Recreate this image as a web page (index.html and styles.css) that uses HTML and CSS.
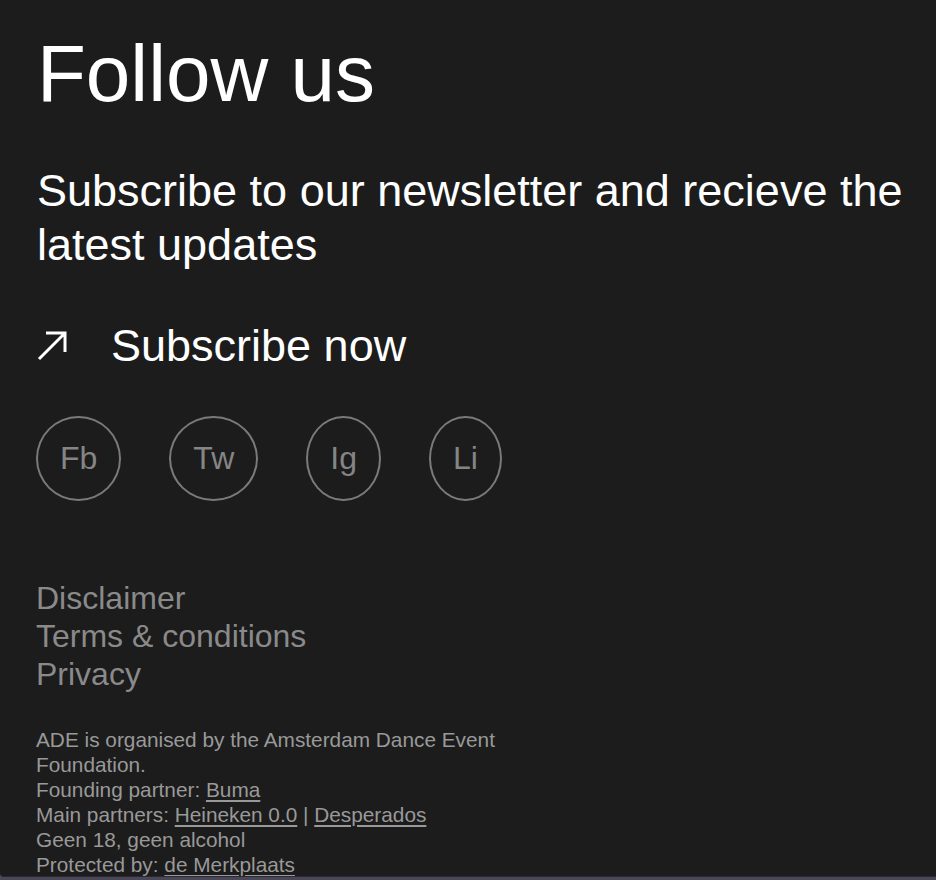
FILE: index.html
```html
<!DOCTYPE html>
<html lang="en">
<head>
<meta charset="utf-8">
<title>Follow us</title>
<link rel="stylesheet" href="styles.css">
</head>
<body>
<footer class="footer">
  <h1 class="title">Follow us</h1>
  <p class="lead">Subscribe to our newsletter and recieve the latest updates</p>
  <a class="subscribe" href="#">
    <svg class="arrow" width="30" height="30" viewBox="0 0 30 30" aria-hidden="true">
      <path d="M2 28 L28 2 M9 2 H28 V21" fill="none" stroke="#fff" stroke-width="3"/>
    </svg>
    <span>Subscribe now</span>
  </a>
  <ul class="socials">
    <li><a class="social" href="#">Fb</a></li>
    <li><a class="social" href="#">Tw</a></li>
    <li><a class="social" href="#">Ig</a></li>
    <li><a class="social" href="#">Li</a></li>
  </ul>
  <ul class="legal">
    <li><a href="#">Disclaimer</a></li>
    <li><a href="#">Terms &amp; conditions</a></li>
    <li><a href="#">Privacy</a></li>
  </ul>
  <div class="credits">
    <p>ADE is organised by the Amsterdam Dance Event Foundation.</p>
    <p>Founding partner: <a href="#">Buma</a></p>
    <p>Main partners: <a href="#">Heineken 0.0</a> | <a href="#">Desperados</a></p>
    <p>Geen 18, geen alcohol</p>
    <p>Protected by: <a href="#">de Merkplaats</a></p>
  </div>
</footer>
</body>
</html>
```

FILE: styles.css
```css
html, body {
  margin: 0;
  padding: 0;
  background: #4a4858;
}
body {
  font-family: "Liberation Sans", Arial, Helvetica, sans-serif;
  color: #fff;
  height: 880px;
  overflow: hidden;
}
.footer {
  box-sizing: border-box;
  height: 877px;
  background: #1c1c1c;
  border-bottom: 1px solid #2a2a2e;
  border-bottom-left-radius: 4px;
  padding: 28px 0 0 37px;
  display: flex;
  flex-direction: column;
  align-items: flex-start;
  overflow: hidden;
}
.title {
  margin: 0;
  font-size: 80px;
  font-weight: 400;
  line-height: 92px;
}
.lead {
  margin: 44px 0 0;
  font-size: 45px;
  line-height: 54px;
  max-width: 890px;
}
.subscribe {
  margin-top: 47px;
  display: flex;
  align-items: center;
  gap: 44px;
  color: #fff;
  text-decoration: none;
  font-size: 45px;
  line-height: 54px;
}
.arrow {
  display: block;
  flex: none;
}
.socials {
  list-style: none;
  margin: 43px 0 0 -1px;
  padding: 0;
  display: flex;
  gap: 48px;
}
.social {
  display: flex;
  align-items: center;
  justify-content: center;
  height: 81px;
  padding: 0 22px;
  border: 2px solid #7a7a7a;
  border-radius: 50%;
  color: #858585;
  text-decoration: none;
  font-size: 32px;
}
.legal {
  list-style: none;
  margin: 78px 0 0 -1px;
  padding: 0;
  font-size: 32px;
  line-height: 38px;
}
.legal a {
  color: #8a8a8a;
  text-decoration: none;
}
.credits {
  margin: 34px 0 0 -1px;
  width: 500px;
  font-size: 20.8px;
  line-height: 25px;
  color: #999;
}
.credits p {
  margin: 0;
}
.credits a {
  color: #999;
  text-decoration: underline;
  text-underline-offset: 3px;
}
```
